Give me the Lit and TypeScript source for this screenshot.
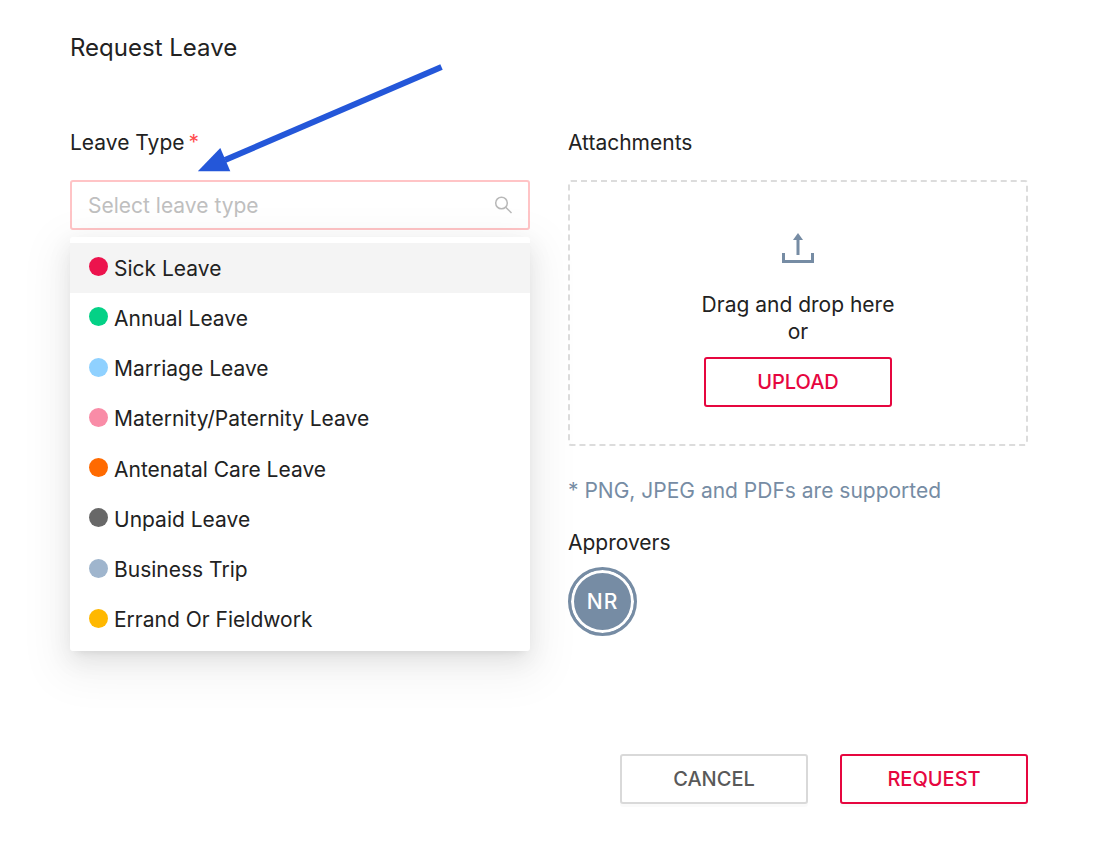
import { LitElement, html, css } from "lit";
import { customElement, state } from "lit/decorators.js";
import { classMap } from "lit/directives/class-map.js";

interface LeaveType {
  id: string;
  label: string;
}

const LEAVE_TYPES: LeaveType[] = [
  { id: "sick", label: "Sick Leave" },
  { id: "annual", label: "Annual Leave" },
  { id: "marriage", label: "Marriage Leave" },
  { id: "parental", label: "Maternity/Paternity Leave" },
  { id: "antenatal", label: "Antenatal Care Leave" },
  { id: "unpaid", label: "Unpaid Leave" },
  { id: "business", label: "Business Trip" },
  { id: "errand", label: "Errand Or Fieldwork" },
];

@customElement("leave-type-select")
export class LeaveTypeSelect extends LitElement {
  static styles = css`
    :host {
      display: block;
      position: relative;
    }
    .label {
      display: flex;
      gap: 4px;
      line-height: 34px;
      margin-bottom: 20px;
    }
    .required {
      color: #ff4d4f;
    }
    .control {
      display: flex;
      align-items: center;
      box-sizing: border-box;
      height: 50px;
      padding: 0 16px;
      border: 2px solid #ffc4c6;
      border-radius: 3px;
      background: #fff;
    }
    .input {
      flex: 1;
      min-width: 0;
      padding: 0;
      border: 0;
      outline: 0;
      background: none;
      font: inherit;
      color: inherit;
    }
    .input::placeholder {
      color: #bfbfbf;
      opacity: 1;
    }
    .search {
      width: 18px;
      height: 18px;
      fill: none;
      stroke: #b8b8b8;
      stroke-width: 1.5;
    }
    .menu {
      position: absolute;
      top: calc(100% + 7px);
      left: 0;
      right: 0;
      display: grid;
      grid-auto-rows: 1fr;
      box-sizing: border-box;
      min-height: 414px;
      margin: 0;
      padding: 6px 0;
      list-style: none;
      background: #fff;
      border-radius: 3px;
      box-shadow:
        0 5px 9px -6px rgba(0, 0, 0, 0.12),
        0 9px 25px 0 rgba(0, 0, 0, 0.08),
        0 14px 44px 13px rgba(0, 0, 0, 0.05);
    }
    .option {
      display: flex;
      align-items: center;
      gap: 6px;
      padding: 0 19px;
      cursor: pointer;
    }
    .active {
      background: #f4f4f4;
    }
    .dot {
      width: 19px;
      height: 19px;
      margin-bottom: 3px;
      border-radius: 50%;
    }
    .sick { background: #ec134d; }
    .annual { background: #04d186; }
    .marriage { background: #8fd1ff; }
    .parental { background: #f98ca7; }
    .antenatal { background: #ff6a00; }
    .unpaid { background: #686868; }
    .business { background: #9fb5cd; }
    .errand { background: #ffb800; }
    .pointer {
      position: absolute;
      top: -63px;
      left: 127px;
      width: 247px;
      height: 110px;
      pointer-events: none;
    }
  `;

  @state() private active = 0;
  @state() private value = "";

  render() {
    return html`
      <label class="label" for="leave-type">
        <span>Leave Type</span><span class="required">*</span>
      </label>
      <div class="control">
        <input
          class="input"
          id="leave-type"
          type="text"
          role="combobox"
          aria-expanded="true"
          aria-controls="leave-menu"
          placeholder="Select leave type"
          .value=${this.value}
        />
        <svg class="search" viewBox="0 0 18 18" aria-hidden="true">
          <circle cx="7.500" cy="7" r="5.800" />
          <path d="M11.700 11.200 17.500 17" />
        </svg>
      </div>
      <ul class="menu" id="leave-menu" role="listbox">
        ${LEAVE_TYPES.map(
          (type, i) => html`
            <li
              class=${classMap({ option: true, active: i === this.active })}
              role="option"
              aria-selected=${i === this.active}
              @mouseenter=${() => (this.active = i)}
              @click=${() => (this.value = type.label)}
            >
              <span class=${classMap({ dot: true, [type.id]: true })}></span>
              <span>${type.label}</span>
            </li>
          `
        )}
      </ul>
      <svg class="pointer" viewBox="0 0 247 110" aria-hidden="true">
        <path d="M244.500 4 28 97" fill="none" stroke="#2457d9" stroke-width="6" />
        <path d="M.8 108.300 23.300 85 33.300 108.300Z" fill="#2457d9" />
      </svg>
    `;
  }
}

@customElement("app-root")
export class AppRoot extends LitElement {
  static styles = css`
    :host {
      display: block;
      box-sizing: border-box;
      padding: 30px 72px 40px 70px;
      background: #fff;
      color: #222;
      font-family: Inter, "Liberation Sans", sans-serif;
      font-size: 21px;
      line-height: 27px;
    }
    .title {
      margin: 0 0 60px;
      font-size: 24px;
      font-weight: 400;
      line-height: 36px;
    }
    .columns {
      display: grid;
      grid-template-columns: 1fr 1fr;
      gap: 38px;
      align-items: start;
    }
    .heading {
      margin: 0;
      font-size: 21px;
      font-weight: 400;
      line-height: 34px;
    }
    .dropzone {
      display: flex;
      flex-direction: column;
      align-items: center;
      margin-top: 20px;
      padding: 51px 20px 37px;
      border: 2px dashed #dcdcdc;
      border-radius: 3px;
      text-align: center;
    }
    .upload-icon {
      width: 32px;
      height: 30px;
      margin-bottom: 28px;
      fill: none;
      stroke: #768ca4;
      stroke-width: 3;
    }
    .drop-text {
      margin: 0 0 12px;
    }
    .note {
      margin: 28px 0 18px;
      color: #768ca4;
      line-height: 34px;
    }
    .avatar {
      display: grid;
      place-items: center;
      box-sizing: border-box;
      width: 69px;
      height: 69px;
      margin-top: 7px;
      border: 3px solid #768ca4;
      border-radius: 50%;
      background: #768ca4;
      box-shadow: inset 0 0 0 3px #fff;
      color: #fff;
      font-weight: 500;
      letter-spacing: 1px;
    }
    .actions {
      display: flex;
      justify-content: flex-end;
      gap: 32px;
      margin-top: 118px;
    }
    .button {
      box-sizing: border-box;
      width: 188px;
      height: 50px;
      padding: 0;
      border: 2px solid #e6063f;
      border-radius: 3px;
      background: #fff;
      color: #e6063f;
      font: inherit;
      font-size: 20px;
      font-weight: 500;
      cursor: pointer;
    }
    .raised {
      box-shadow: 0 3px 0 rgba(0, 0, 0, 0.02);
    }
    .neutral {
      border-color: #d9d9d9;
      color: #595959;
    }
  `;

  render() {
    return html`
      <main>
        <h1 class="title">Request Leave</h1>
        <div class="columns">
          <leave-type-select></leave-type-select>
          <section>
            <h2 class="heading">Attachments</h2>
            <div class="dropzone">
              <svg class="upload-icon" viewBox="0 0 32 30" aria-hidden="true">
                <path d="M1.500 20V28.500H30.500V20M16 22V5" />
                <path d="M16 0 21 7H11Z" fill="#768ca4" stroke="none" />
              </svg>
              <p class="drop-text">Drag and drop here<br />or</p>
              <button class="button" type="button">UPLOAD</button>
            </div>
            <p class="note">* PNG, JPEG and PDFs are supported</p>
            <h2 class="heading">Approvers</h2>
            <div class="avatar">NR</div>
          </section>
        </div>
        <div class="actions">
          <button class="button raised neutral" type="button">CANCEL</button>
          <button class="button raised" type="button">REQUEST</button>
        </div>
      </main>
    `;
  }
}
